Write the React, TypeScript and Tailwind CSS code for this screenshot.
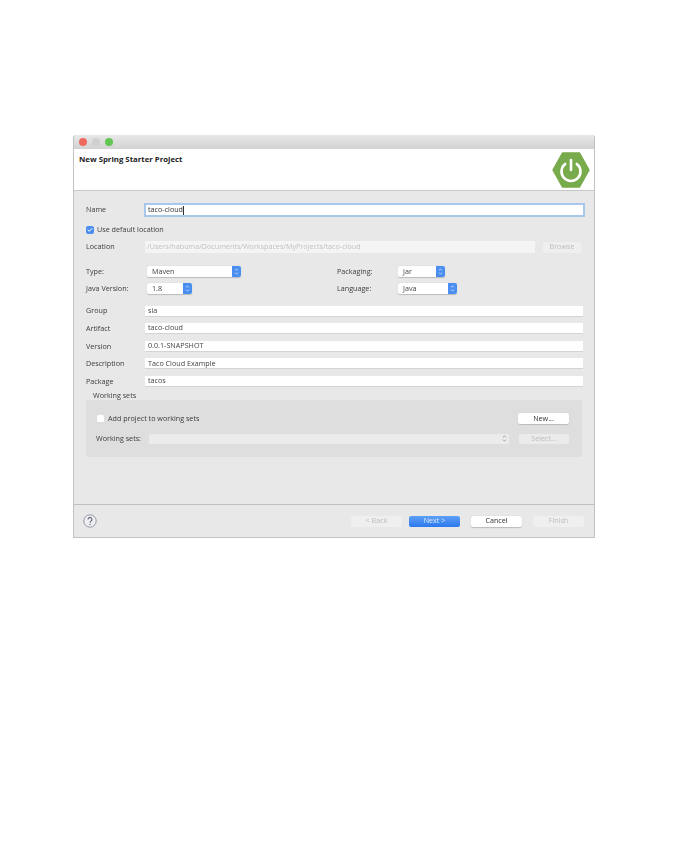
import { ChevronUp, ChevronDown, Check } from "lucide-react";

const labelClass = "text-[#3c3c3c]";

function TextRow({ label, value }: { label: string; value: string }) {
  return (
    <div className="flex items-center h-[11px] mb-[6.6px]">
      <span className={`w-[59px] ${labelClass}`}>{label}</span>
      <div className="w-[438px] h-[11px] bg-white border-b border-[#d4d4d4] pl-[3px] flex items-center text-[#444]">
        {value}
      </div>
    </div>
  );
}

function Stepper({ muted }: { muted?: boolean }) {
  return (
    <span
      className={`flex flex-col items-center justify-center w-[9px] h-[11px] rounded-r-[2px] ${
        muted ? "text-[#777]" : "bg-[#4a8ff0] text-white"
      }`}
    >
      <ChevronUp size={5} strokeWidth={3} className="-mb-[0.5px]" />
      <ChevronDown size={5} strokeWidth={3} className="-mt-[0.5px]" />
    </span>
  );
}

function Select({ value, width }: { value: string; width: string }) {
  return (
    <div className={`flex items-center justify-between h-[11px] bg-white rounded-[2px] shadow-[0_0.5px_1px_#bbb] pl-[5px] text-[#444] ${width}`}>
      {value}
      <Stepper />
    </div>
  );
}

function Button({ label, kind }: { label: string; kind?: "primary" | "disabled" }) {
  const look =
    kind === "primary"
      ? "bg-gradient-to-b from-[#5da0f5] to-[#2a78ee] text-[#dbe9fc]"
      : kind === "disabled"
        ? "bg-[#efefef] text-[#bdbdbd]"
        : "bg-white text-[#333] shadow-[0_0.5px_1px_#bbb]";
  return (
    <div className={`flex items-center justify-center w-[51px] h-[11px] rounded-[2px] ${look}`}>
      {label}
    </div>
  );
}

export default function App() {
  return (
    <div className="w-[679px] h-[851px] bg-white pt-[135px] pl-[73px] text-[7.2px] leading-none font-['Open_Sans',sans-serif]">
      <div className="w-[522px] h-[403px] flex flex-col overflow-hidden rounded-t-[3px] border-x border-b border-[#c2c2c2] bg-[#e8e8e8] blur-[0.4px]">
        {/* Title bar */}
        <div className="flex items-center gap-[5px] h-[14px] pl-[5px] bg-gradient-to-b from-[#e8e8e8] to-[#d2d2d2]">
          <span className="w-[8px] h-[8px] rounded-full bg-[#ee6a5f]" />
          <span className="w-[8px] h-[8px] rounded-full bg-[#d0d0d0]" />
          <span className="w-[8px] h-[8px] rounded-full bg-[#62c554]" />
        </div>

        {/* Banner */}
        <div className="flex justify-between h-[42px] bg-white border-b border-[#c8c8c8] pl-[5px] pr-[4px]">
          <span className="pt-[7px] text-[7.8px] font-bold text-[#222]">New Spring Starter Project</span>
          <svg width="38" height="36" viewBox="0 0 38 36" className="mt-[3px]">
            <polygon points="10.5,1 27.5,1 37,18 27.5,35 10.5,35 1,18" fill="#78ab4b" stroke="#78ab4b" strokeWidth="1.5" strokeLinejoin="round" />
            <path d="M13.2 12a9.5 9.5 0 1 0 11.6 0" fill="none" stroke="#fff" strokeWidth="2.6" strokeLinecap="round" />
            <path d="M19 8v10" fill="none" stroke="#fff" strokeWidth="2.6" strokeLinecap="round" />
          </svg>
        </div>

        {/* Form */}
        <div className="flex-1 pl-[12px] pt-[12px]">
          <div className="flex items-center h-[14px]">
            <span className={`w-[58px] ${labelClass}`}>Name</span>
            <div className="flex items-center w-[441px] h-[14px] bg-white border-2 border-[#a9c6ec] pl-[2px] text-[#333]">
              taco-cloud
              <span className="w-px h-[9px] bg-[#333]" />
            </div>
          </div>

          <div className={`flex items-center gap-[3px] h-[9px] mt-[8px] ${labelClass}`}>
            <span className="flex items-center justify-center w-[8px] h-[8px] rounded-[2px] bg-[#4a8ff0] text-white">
              <Check size={6} strokeWidth={4} />
            </span>
            Use default location
          </div>

          <div className="flex items-center h-[12px] mt-[7px]">
            <span className={`w-[59px] ${labelClass}`}>Location</span>
            <div className="flex items-center w-[390px] h-[12px] bg-[#f4f4f4] pl-[2px] text-[#c2c2c2]">
              /Users/habuma/Documents/Workspaces/MyProjects/taco-cloud
            </div>
            <div className="flex items-center justify-center w-[38px] h-[11px] ml-[8px] rounded-[2px] bg-[#efefef] text-[#bdbdbd]">
              Browse
            </div>
          </div>

          <div className="flex h-[28px] mt-[13px]">
            <div className={`flex flex-col justify-between w-[61px] ${labelClass}`}>
              <span className="h-[11px] flex items-center">Type:</span>
              <span className="h-[11px] flex items-center">Java Version:</span>
            </div>
            <div className="flex flex-col justify-between w-[190px]">
              <Select value="Maven" width="w-[94px]" />
              <Select value="1.8" width="w-[45px]" />
            </div>
            <div className={`flex flex-col justify-between w-[61px] ${labelClass}`}>
              <span className="h-[11px] flex items-center">Packaging:</span>
              <span className="h-[11px] flex items-center">Language:</span>
            </div>
            <div className="flex flex-col justify-between">
              <Select value="Jar" width="w-[47px]" />
              <Select value="Java" width="w-[59px]" />
            </div>
          </div>

          <div className="mt-[11.5px]">
            <TextRow label="Group" value="sia" />
            <TextRow label="Artifact" value="taco-cloud" />
            <TextRow label="Version" value="0.0.1-SNAPSHOT" />
            <TextRow label="Description" value="Taco Cloud Example" />
            <TextRow label="Package" value="tacos" />
          </div>

          <div className={`pl-[7px] -mt-[2px] h-[8px] flex items-center ${labelClass}`}>Working sets</div>
          <div className="w-[496px] h-[57px] mt-[1px] rounded-[2px] bg-[#dedede] pl-[11px] pr-[13px] pt-[13px]">
            <div className="flex items-center justify-between h-[10px]">
              <div className={`flex items-center gap-[4px] ${labelClass}`}>
                <span className="w-[7px] h-[7px] rounded-[1.5px] bg-white" />
                Add project to working sets
              </div>
              <Button label="New..." />
            </div>
            <div className="flex items-center h-[11px] mt-[10px] -ml-[1px]">
              <span className={`w-[53px] ${labelClass}`}>Working sets:</span>
              <div className="flex items-center justify-end w-[360px] h-[10px] rounded-[1px] bg-[#ebebeb]">
                <Stepper muted />
              </div>
              <div className="flex items-center justify-center w-[50px] h-[10px] ml-[10px] rounded-[1px] bg-[#ebebeb] text-[#bdbdbd]">
                Select...
              </div>
            </div>
          </div>
        </div>

        {/* Footer */}
        <div className="flex items-center justify-between h-[33px] border-t border-[#c0c0c0] pl-[9px] pr-[10px]">
          <svg width="14" height="14" viewBox="0 0 14 14">
            <circle cx="7" cy="7" r="6.2" fill="#efeff2" stroke="#8b8fa0" strokeWidth="0.9" />
            <path d="M5 5.4a2 2 0 1 1 3.1 1.7c-.7.5-1.1.8-1.1 1.6" fill="none" stroke="#5a6078" strokeWidth="1.1" />
            <circle cx="7" cy="10.4" r="0.7" fill="#5a6078" />
          </svg>
          <div className="flex items-center">
            <Button label="< Back" kind="disabled" />
            <div className="ml-[7px]"><Button label="Next >" kind="primary" /></div>
            <div className="ml-[11px]"><Button label="Cancel" /></div>
            <div className="ml-[11px]"><Button label="Finish" kind="disabled" /></div>
          </div>
        </div>
      </div>
    </div>
  );
}
